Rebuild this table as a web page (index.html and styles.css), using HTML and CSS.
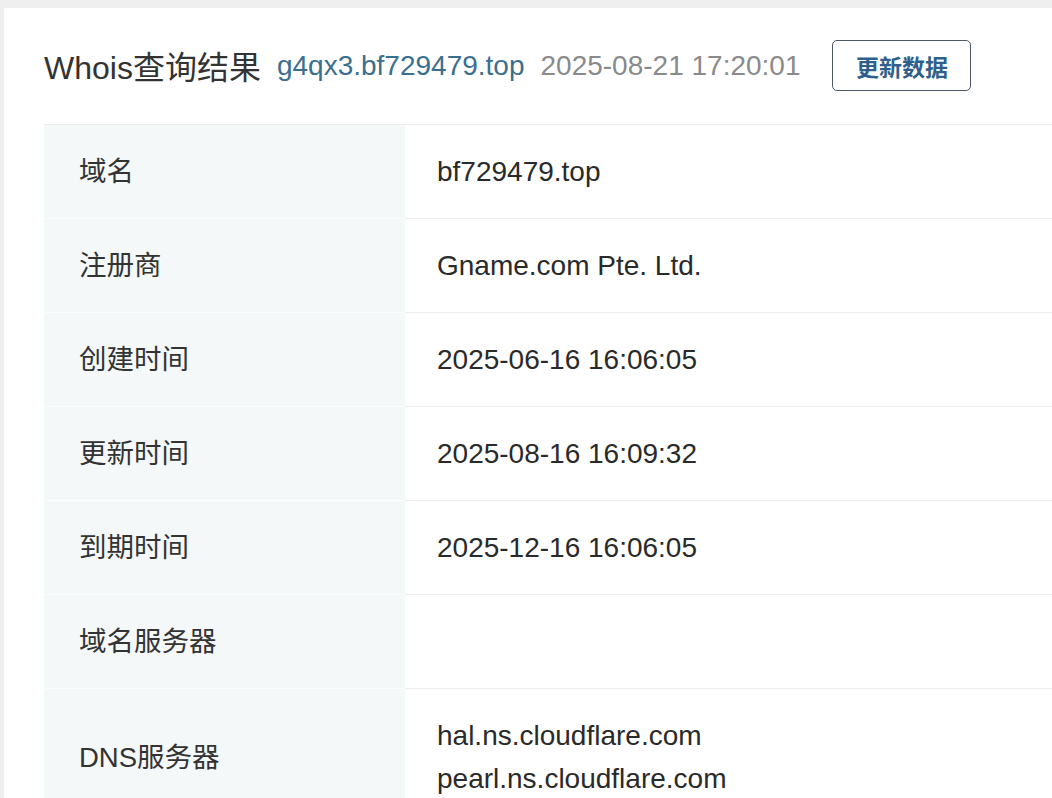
FILE: index.html
```html
<!DOCTYPE html>
<html lang="zh-CN">
<head>
  <meta charset="UTF-8" />
  <meta name="viewport" content="width=device-width, initial-scale=1.0"/>
  <title>Whois查询结果</title>
  <link rel="stylesheet" href="styles.css">
</head>

<body>
  <div class="card">
    <!-- Header: title, queried domain, timestamp, refresh button -->
    <div class="result-head">
      <h1 class="result-title">Whois查询结果</h1>
      <a class="result-domain" href="#">g4qx3.bf729479.top</a>
      <span class="result-time">2025-08-21 17:20:01</span>
      <button class="btn-refresh" type="button">更新数据</button>
    </div>

    <!-- Whois details -->
    <table class="whois-table">
      <tr>
        <th>域名</th>
        <td>bf729479.top</td>
      </tr>
      <tr>
        <th>注册商</th>
        <td>Gname.com Pte. Ltd.</td>
      </tr>
      <tr>
        <th>创建时间</th>
        <td>2025-06-16 16:06:05</td>
      </tr>
      <tr>
        <th>更新时间</th>
        <td>2025-08-16 16:09:32</td>
      </tr>
      <tr>
        <th>到期时间</th>
        <td>2025-12-16 16:06:05</td>
      </tr>
      <tr>
        <th>域名服务器</th>
        <td></td>
      </tr>
      <tr>
        <th>DNS服务器</th>
        <td>
          hal.ns.cloudflare.com<br/>
          pearl.ns.cloudflare.com
        </td>
      </tr>
    </table>
  </div>
</body>
</html>
```

FILE: styles.css
```css
* {
  margin: 0;
  padding: 0;
  box-sizing: border-box;
}
html, body {
  height: 100%;
}
body {
  font-family: "Liberation Sans", Arial, "Noto Sans CJK SC", sans-serif;
  background: #efefef;
  color: #333;
  overflow: hidden;
}

/* White panel holding everything */
.card {
  background: #fff;
  margin: 8px 0 0 4px;
  padding: 32px 0 0 40px;
  min-height: 100%;
  width: 1100px;
}

/* Header row */
.result-head {
  display: flex;
  align-items: center;
  height: 51px;
}
.result-title {
  font-size: 32px;
  font-weight: normal;
  color: #333;
  margin-right: 16px;
  margin-bottom: 2px;
}
.result-domain {
  font-size: 28px;
  color: #3c6f8e;
  text-decoration: none;
  margin-right: 16px;
}
.result-time {
  font-size: 28px;
  color: #8a8a8a;
  margin-right: 32px;
}
.btn-refresh {
  font-family: "Liberation Sans", "Noto Sans CJK SC", sans-serif;
  font-size: 23px;
  font-weight: 600;
  color: #2f5f8c;
  background: #fff;
  border: 1.5px solid #4d5866;
  border-radius: 5px;
  width: 139px;
  height: 51px;
}

/* Details table */
.whois-table {
  margin-top: 33px;
  border-collapse: collapse;
  width: 1020px;
  border-top: 1px solid #ececec;
  font-size: 28px;
}
.whois-table th,
.whois-table td {
  padding: 25px 32px 25px 35px;
  line-height: 43px;
  text-align: left;
  font-weight: normal;
  vertical-align: middle;
}
.whois-table th {
  width: 361px;
  background: #f4f8f9;
  border-bottom: 1px solid #fbfcfc;
  color: #333;
  font-size: 27.5px;
}
.whois-table td {
  padding-left: 32px;
  color: #2a2a2a;
  border-bottom: 1px solid #ececec;
}
```
